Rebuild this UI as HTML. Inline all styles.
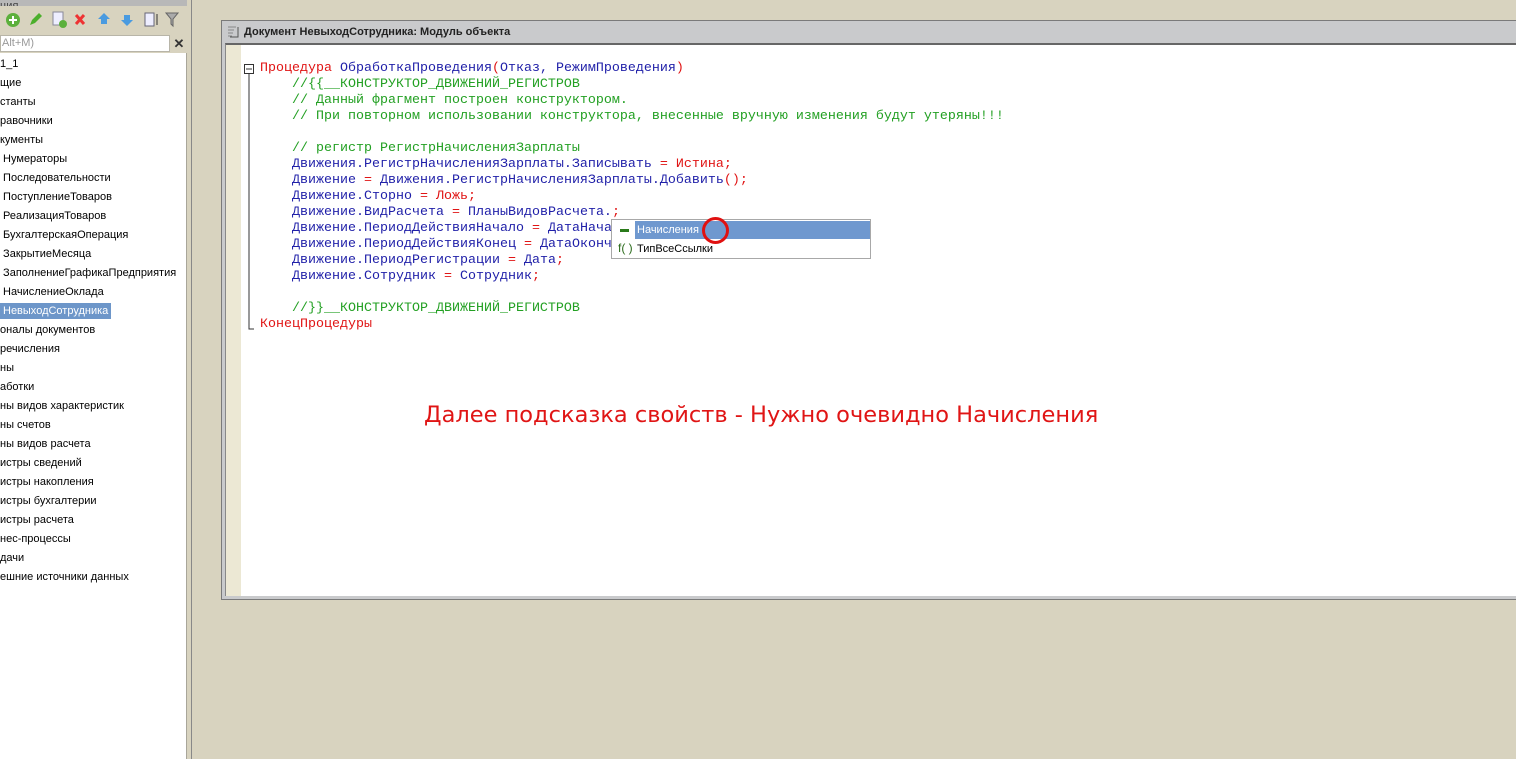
<!DOCTYPE html>
<html><head><meta charset="utf-8"><style>
*{margin:0;padding:0;box-sizing:border-box}
body{width:1516px;height:759px;background:#d8d3bf;position:relative;overflow:hidden;font-family:"Liberation Sans",Arial,sans-serif}
.lp{position:absolute;left:0;top:0;width:187px;height:759px;background:#fff;border-right:1px solid #a9a69a}
.hdr{position:absolute;left:0;top:0;width:187px;height:6px;background:#b8b8b8;font-size:11px;color:#444;overflow:hidden}
.tb{position:absolute;left:0;top:6px;width:187px;height:27px;background:#d8d3bf}
.srch{position:absolute;left:0;top:33px;width:187px;height:20px;background:#d8d3bf}
.srch .in{position:absolute;left:0;top:2px;width:170px;height:17px;background:#fff;border:1px solid #b8b5a8;font-size:11px;color:#999;padding-left:1px;line-height:15px}
.srch .x{position:absolute;left:172px;top:3px;width:14px;height:15px;font-size:13px;font-weight:bold;color:#333;line-height:15px;text-align:center}
.tree{position:absolute;left:0;top:55px;font-size:11px;color:#000}
.tree div{height:19px;line-height:18px;white-space:nowrap}
.sel{background:#6d96c9;color:#fff;display:inline-block;padding:0 3px;line-height:16px}
.sep{position:absolute;left:187px;top:0;width:5px;height:759px;background:#d8d3bf;border-right:1px solid #888}
.win{position:absolute;left:221px;top:20px;width:1295px;height:580px;border:1px solid #7a7a7a;border-right:none;background:#c9cacc}
.tt{position:absolute;left:0;top:0;height:22px;width:100%;font-size:11px;font-weight:bold;color:#222;line-height:22px;padding-left:22px}
.ed{position:absolute;left:3px;top:22px;right:0;bottom:3px;background:#fff;border-top:2px solid #666;border-left:1px solid #888}
.gut{position:absolute;left:0;top:0;width:15px;height:100%;background:#ece8d4}
.code{position:absolute;left:34px;top:16px;font-family:"Liberation Mono",monospace;font-size:13.33px;line-height:16px;white-space:pre;color:#1f1fa8}
.k{color:#e01515}.c{color:#23a023}.r{color:#e01515}
.pop{position:absolute;left:611px;top:219px;width:260px;height:40px;background:#fff;border:1px solid #a8a8a8;font-size:11px}
.pop .a{position:absolute;left:23px;top:1px;width:235px;height:18px;background:#6f98cf;color:#fff;line-height:18px;padding-left:2px}
.pop .b{position:absolute;left:25px;top:20px;line-height:18px}
.cap{position:absolute;left:424px;top:402px;font-family:"DejaVu Sans",sans-serif;font-size:22.5px;color:#e01515;white-space:nowrap}
</style></head><body>
<div class="lp">
<div class="hdr">ция</div>
<div class="tb"><svg width="187" height="27">
<circle cx="13" cy="14" r="7" fill="#5cb03c"/><path d="M9 14h8M13 10v8" stroke="#fff" stroke-width="2"/>
<path d="M30 19l2-5 7-7 3 3-7 7z" fill="#4caf2c"/>
<rect x="53" y="6" width="10" height="13" fill="#eef" stroke="#889"/><circle cx="63" cy="18" r="4" fill="#5cb03c"/>
<path d="M76 9l8 9M84 9l-8 9" stroke="#e33" stroke-width="3"/>
<path d="M104 7l6 6h-3v5h-6v-5h-3z" fill="#4a9be0"/>
<path d="M127 20l6-6h-3v-5h-6v5h-3z" fill="#4a9be0"/>
<rect x="145" y="7" width="9" height="13" fill="#eef" stroke="#667"/><path d="M157 8v11" stroke="#333"/>
<path d="M166 7h12l-5 6v7l-2-2v-5z" fill="#aaa" stroke="#666"/>
</svg></div>
<div class="srch"><div class="in">Alt+M)</div><div class="x">✕</div></div>
<div class="tree">
<div>1_1</div><div>щие</div><div>станты</div><div>равочники</div><div>кументы</div>
<div>&nbsp;Нумераторы</div><div>&nbsp;Последовательности</div><div>&nbsp;ПоступлениеТоваров</div><div>&nbsp;РеализацияТоваров</div><div>&nbsp;БухгалтерскаяОперация</div><div>&nbsp;ЗакрытиеМесяца</div><div>&nbsp;ЗаполнениеГрафикаПредприятия</div><div>&nbsp;НачислениеОклада</div><div><span class="sel">НевыходСотрудника</span></div>
<div>оналы документов</div><div>речисления</div><div>ны</div><div>аботки</div><div>ны видов характеристик</div><div>ны счетов</div><div>ны видов расчета</div><div>истры сведений</div><div>истры накопления</div><div>истры бухгалтерии</div><div>истры расчета</div><div>нес-процессы</div><div>дачи</div><div>ешние источники данных</div>
</div>
</div>
<div class="sep"></div>
<div class="win">
<svg style="position:absolute;left:5px;top:5px" width="12" height="12"><path d="M1 1h8M1 4h6M1 7h5M1 10h4" stroke="#888"/><path d="M11 1v10H3" stroke="#555" fill="none"/></svg>
<div class="tt">Документ НевыходСотрудника: Модуль объекта</div>
<div class="ed">
<div class="gut"></div>
<svg style="position:absolute;left:18px;top:19px" width="12" height="270"><rect x="0.5" y="0.5" width="9" height="9" fill="#fff" stroke="#333"/><path d="M2 5h6" stroke="#333"/><path d="M5 10v255h5" stroke="#333" fill="none"/></svg>
<div class="code"><span class="k">Процедура</span> ОбработкаПроведения<span class="k">(</span>Отказ, РежимПроведения<span class="k">)</span>
<span class="c">    //{{__КОНСТРУКТОР_ДВИЖЕНИЙ_РЕГИСТРОВ
    // Данный фрагмент построен конструктором.
    // При повторном использовании конструктора, внесенные вручную изменения будут утеряны!!!</span>

<span class="c">    // регистр РегистрНачисленияЗарплаты</span>
    Движения.РегистрНачисленияЗарплаты.Записывать <span class="r">=</span> <span class="r">Истина;</span>
    Движение <span class="r">=</span> Движения.РегистрНачисленияЗарплаты.Добавить<span class="r">();</span>
    Движение.Сторно <span class="r">=</span> <span class="r">Ложь;</span>
    Движение.ВидРасчета <span class="r">=</span> ПланыВидовРасчета.<span class="r">;</span>
    Движение.ПериодДействияНачало <span class="r">=</span> ДатаНача
    Движение.ПериодДействияКонец <span class="r">=</span> ДатаОконч
    Движение.ПериодРегистрации <span class="r">=</span> Дата<span class="r">;</span>
    Движение.Сотрудник <span class="r">=</span> Сотрудник<span class="r">;</span>

<span class="c">    //}}__КОНСТРУКТОР_ДВИЖЕНИЙ_РЕГИСТРОВ</span>
<span class="k">КонецПроцедуры</span></div>
</div>
</div>
<div class="pop">
<div style="position:absolute;left:8px;top:9px;width:9px;height:3px;background:#2a7a1a"></div>
<div class="a">Начисления</div>
<div style="position:absolute;left:6px;top:21px;font-size:12px;color:#2a6a1a">f( )</div>
<div class="b">ТипВсеСсылки</div>
</div>
<div style="position:absolute;left:702px;top:217px;width:27px;height:27px;border:3px solid #e01010;border-radius:50%"></div>
<div class="cap">Далее подсказка свойств - Нужно очевидно Начисления</div>
</body></html>
